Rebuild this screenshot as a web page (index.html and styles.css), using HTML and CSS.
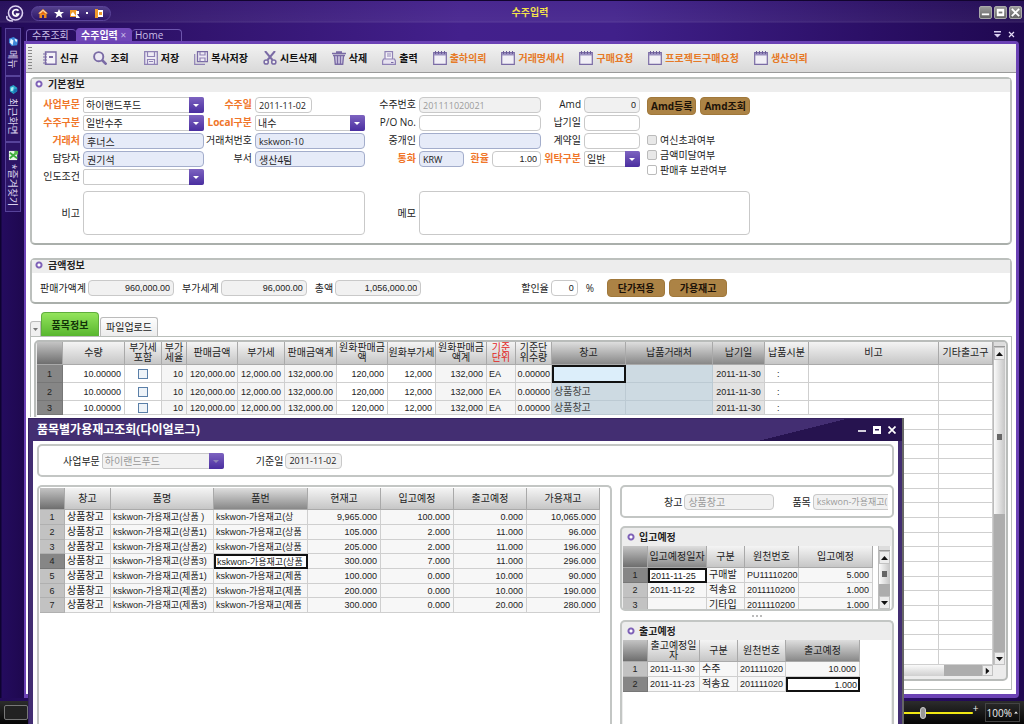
FILE: index.html
```
<!DOCTYPE html>
<html lang="ko">
<head>
<meta charset="utf-8">
<title>수주입력</title>
<link rel="stylesheet" href="styles.css">
</head>
<body>
<svg class="defs" aria-hidden="true">
  <symbol id="i-form" viewBox="0 0 14 14"><path d="M.7 1.500h12.600v11.800H.7z" fill="#f1eff6" stroke="#7a6ba5" stroke-width="1.200"/><path d="M1 2h12v2.500H1z" fill="#9a8fc0"/><path d="M2.500 0v3M5.500 0v3M8.500 0v3M11.500 0v3" stroke="#6c5d98"/></symbol>
  <symbol id="i-drop" viewBox="0 0 7 4"><path d="M0 0h7L3.500 4z" fill="currentColor"/></symbol>
</svg>
<div class="app">
  <header class="titlebar">
    <svg class="logo" viewBox="0 0 18 17"><circle cx="9.500" cy="8" r="7" fill="#3a2170" stroke="#ddd3f2" stroke-width="1.600"/><path d="M12.500 5.800C11 4 7 4.200 6.700 7.600c0 4 4.800 4.400 5.800 1.600H9.800" fill="none" stroke="#fff" stroke-width="1.700"/><path d="M1 11c-1 3 1 5 6 5" fill="none" stroke="#ddd3f2" stroke-width="1.500"/></svg>
    <nav class="quick">
      <button aria-label="홈"><svg viewBox="0 0 10 9"><path d="M5 0l5 4.500H8.500V9H6V6H4v3H1.500V4.500H0z" fill="#f08a1c"/><path d="M5 .5L9.500 4.500H.5z" fill="#ffd9a8"/><path d="M5 2l3 3H2z" fill="#e66a10"/></svg></button>
      <button aria-label="즐겨찾기"><svg viewBox="0 0 10 9"><path d="M5 0l1.400 3H10L7.200 5.200 8.300 9 5 6.800 1.700 9l1.100-3.800L0 3h3.600z" fill="#fff"/></svg></button>
      <button aria-label="화면"><svg viewBox="0 0 10 9"><path d="M0 1h7v7H0z" fill="#f09a2c"/><path d="M1 5l2-2 3 4H1z" fill="#fff"/><path d="M6 2h3v3H7l3 4H6z" fill="#fff"/></svg></button>
      <i class="quick-dot"></i>
      <button aria-label="종료"><svg viewBox="0 0 10 9"><path d="M1 0h3v9H1z" fill="#f09a2c"/><path d="M4 1h5v7H4z" fill="#fff"/><path d="M5 3h3v3H5z" fill="#f09a2c"/></svg></button>
    </nav>
    <h1 class="app-title">수주입력</h1>
    <div class="winbtns">
      <button aria-label="최소화"><svg viewBox="0 0 12 12"><path d="M2 8h8" stroke="#fff" stroke-width="2"/></svg></button>
      <button aria-label="최대화"><svg viewBox="0 0 12 12"><path d="M2 2h8v8H2z" fill="#fff"/><path d="M4 5h4v2H4z" fill="#777"/></svg></button>
      <button aria-label="닫기"><svg viewBox="0 0 12 12"><path d="M2 2l8 8M10 2l-8 8" stroke="#fff" stroke-width="2"/></svg></button>
    </div>
  </header>

  <div class="middle">
    <aside class="sidebar">
      <button class="side-tab side-menu"><svg viewBox="0 0 12 12"><path d="M1 3l5-2 5 3-1 6-6 1-3-4z" fill="#3c86d8"/><path d="M3 3l3 2-1 5-3-3z" fill="#e8f3ff"/><path d="M7 3l3 1-1 3z" fill="#fff"/></svg>메뉴</button>
      <button class="side-tab side-recent"><svg viewBox="0 0 12 12"><path d="M2 3l4-2 4 3v4l-4 3-4-3z" fill="#2aa5c8"/><path d="M3 4l3-1v4l-3 1z" fill="#a9ecf5"/><path d="M6 6l4-1v3l-4 2z" fill="#1873b5"/></svg>최근화면</button>
      <button class="side-tab side-fav"><svg viewBox="0 0 12 12"><path d="M1 1h9v10H1z" fill="#e8f6e8"/><path d="M2 3l8 6M2 9l7-6" stroke="#3dac3d" stroke-width="2"/><path d="M7 1h4v4H7z" fill="#58b84c"/></svg>*즐겨찾기</button>
    </aside>

    <div class="workspace">
      <div class="doctabs">
        <button class="doctab doctab-a">수주조회</button>
        <button class="doctab doctab-on">수주입력 <span class="x">×</span></button>
        <button class="doctab doctab-b">Home</button>
        <span class="doc-tools"><button aria-label="목록"><svg viewBox="0 0 7 7"><path d="M0 0h7v1.500H0zM0 3h7L3.500 6.500z" fill="#d8cdf0"/></svg></button><button aria-label="탭 닫기"><svg viewBox="0 0 7 7"><path d="M1 1l5 5M6 1L1 6" stroke="#e4dbf6" stroke-width="1.200"/></svg></button></span>
      </div>
      <main class="frame">
        <div class="toolbar">
          <i class="grip"></i>
          <button><svg viewBox="0 0 14 14"><path d="M2.500 1h10.500v12.300H2.500z" fill="#f4f2f8" stroke="#7a6ba5" stroke-width="1.400"/><path d="M6 5h4v2H6z" fill="#7a6ba5"/><path d="M0 3h4M0 6h4M0 9h4M0 12h4" stroke="#7a6ba5"/></svg>신규</button>
          <button><svg viewBox="0 0 14 14"><circle cx="5.700" cy="5.700" r="4.600" fill="#ece9f4" stroke="#7a6ba5" stroke-width="1.900"/><path d="M9 9l4.500 4.500" stroke="#7a6ba5" stroke-width="2.600"/></svg>조회</button>
          <button><svg viewBox="0 0 14 14"><path d="M.7.7h12.600v12.600H.7z" fill="#eeebf5" stroke="#8f82b5" stroke-width="1.300"/><path d="M3.500 1v4.500h7V1M3.500 13V8.500h7V13M5 10.500h4" fill="none" stroke="#8f82b5" stroke-width="1.200"/></svg>저장</button>
          <button><svg viewBox="0 0 14 14"><path d="M3.500.7h10v10h-10z" fill="#eeebf5" stroke="#7a6ba5" stroke-width="1.300"/><path d="M.7 3v10.300H11M6 1v3h5V1M6 10.500V7h5v3.500" fill="none" stroke="#8f82b5" stroke-width="1.200"/></svg>복사저장</button>
          <button><svg viewBox="0 0 14 14"><path d="M2 0l7.500 9M12 0L4.500 9" stroke="#7a6ba5" stroke-width="2"/><circle cx="3.200" cy="11" r="2.100" fill="#eee" stroke="#7a6ba5" stroke-width="1.500"/><circle cx="10.800" cy="11" r="2.100" fill="#eee" stroke="#7a6ba5" stroke-width="1.500"/></svg>시트삭제</button>
          <button><svg viewBox="0 0 14 14"><path d="M0 2.500h14M4 1h6" stroke="#7a6ba5" stroke-width="1.600"/><path d="M1 4.500h12M2.500 5l.8 8.300h7.400l.8-8.300M5.500 5v8M8.500 5v8" fill="#d5cfe6" stroke="#7a6ba5" stroke-width="1.400"/></svg>삭제</button>
          <button><svg viewBox="0 0 14 14"><path d="M3 8V.7h7.500V8" fill="#f4f2f8" stroke="#8f82b5" stroke-width="1.200"/><path d="M5 3h4M5 5h4" stroke="#8f82b5"/><path d="M1.500 8h11l.9 2v3.300H.6V10z" fill="#e6e2f0" stroke="#8f82b5" stroke-width="1.200"/><path d="M9 11.500h2.500" stroke="#7a6ba5"/></svg>출력</button>
          <button class="link"><svg><use href="#i-form"/></svg>출하의뢰</button>
          <button class="link"><svg><use href="#i-form"/></svg>거래명세서</button>
          <button class="link"><svg><use href="#i-form"/></svg>구매요청</button>
          <button class="link"><svg><use href="#i-form"/></svg>프로젝트구매요청</button>
          <button class="link"><svg><use href="#i-form"/></svg>생산의뢰</button>
        </div>

        <section class="panel panel-basic">
          <h2 class="panel-title">기본정보</h2>
          <form class="basic">
            <label class="req first" for="biz">사업부문</label>
            <span class="select"><select id="biz"><option>하이랜드푸드</option></select></span>
            <label class="req" for="odate">수주일</label>
            <input id="odate" class="short num" value="2011-11-02">
            <label for="ono">수주번호</label>
            <input id="ono" class="off num" value="201111020021" readonly>
            <label for="amd">Amd</label>
            <input id="amd" class="flat num r" value="0">
            <span class="btns"><button type="button" class="gold">Amd등록</button><button type="button" class="gold">Amd조회</button></span>

            <label class="req first" for="otype">수주구분</label>
            <span class="select"><select id="otype"><option>일반수주</option></select></span>
            <label class="req" for="local">Local구분</label>
            <span class="select"><select id="local"><option>내수</option></select></span>
            <label for="po">P/O No.</label>
            <input id="po">
            <label for="due">납기일</label>
            <input id="due">
            <span class="checks">
              <label><input type="checkbox" disabled>여신초과여부</label>
              <label><input type="checkbox" disabled>금액미달여부</label>
              <label><input type="checkbox">판매후 보관여부</label>
            </span>

            <label class="req first" for="cust">거래처</label>
            <input id="cust" class="code" value="후너스">
            <label for="custno">거래처번호</label>
            <input id="custno" class="code num" value="kskwon-10">
            <label for="agent">중개인</label>
            <input id="agent" class="code">
            <label for="cdate">계약일</label>
            <input id="cdate">

            <label class="first" for="mgr">담당자</label>
            <input id="mgr" class="code" value="권기석">
            <label for="dept">부서</label>
            <input id="dept" class="code" value="생산4팀">
            <label class="req" for="cur">통화</label>
            <span class="pair"><input id="cur" class="code num" value="KRW"><label class="req" for="rate">환율</label><input id="rate" class="num r" value="1.00"></span>
            <label class="req" for="cons">위탁구분</label>
            <span class="select"><select id="cons"><option>일반</option></select></span>

            <label class="first" for="term">인도조건</label>
            <span class="select"><select id="term"><option></option></select></span>

            <label class="memo-l1" for="note">비고</label>
            <textarea class="memo1" id="note"></textarea>
            <label class="memo-l2" for="memo">메모</label>
            <textarea class="memo2" id="memo"></textarea>
          </form>
        </section>

        <section class="panel panel-amount">
          <h2 class="panel-title">금액정보</h2>
          <form class="amount">
            <label>판매가액계<input class="flat num r" value="960,000.00"></label>
            <label>부가세계<input class="flat num r" value="96,000.00"></label>
            <label>총액<input class="flat num r" value="1,056,000.00"></label>
            <label class="disc">할인율<input class="num r" value="0"></label>
            <span class="pct">%</span>
            <button type="button" class="gold wide">단가적용</button>
            <button type="button" class="gold wide">가용재고</button>
          </form>
        </section>

        <div class="tabs">
          <button class="tab-drop" aria-label="탭 목록"><svg viewBox="0 0 7 4"><use href="#i-drop"/></svg></button>
          <button class="tab tab-on">품목정보</button>
          <button class="tab">파일업로드</button>
        </div>
        <section class="tabpage">
          <div class="gridbox">
            <div class="grid-main">
              <table class="grid items">
                <thead><tr><th class="dk"></th><th>수량</th><th>부가세<br>포함</th><th>부가<br>세율</th><th>판매금액</th><th>부가세</th><th>판매금액계</th><th>원화판매금<br>액</th><th>원화부가세</th><th>원화판매금<br>액계</th><th class="red">기준<br>단위</th><th>기준단<br>위수량</th><th class="dk">창고</th><th class="dk">납품거래처</th><th class="dk">납기일</th><th>납품시분</th><th>비고</th><th>기타출고구</th></tr></thead>
                <tbody>
                  <tr class="tall"><th class="sel">1</th><td>10.00000</td><td class="c"><input type="checkbox" aria-label="부가세포함 1"></td><td class="g">10</td><td class="g">120,000.00</td><td class="g">12,000.00</td><td class="g">132,000.00</td><td>120,000</td><td>12,000</td><td class="g">132,000</td><td class="l g">EA</td><td class="g">0.00000</td><td class="cur l"></td><td class="b"></td><td class="date">2011-11-30</td><td class="t">:</td><td></td><td></td></tr>
                  <tr class="tall"><th class="sel">2</th><td>10.00000</td><td class="c"><input type="checkbox" aria-label="부가세포함 2"></td><td class="g">10</td><td class="g">120,000.00</td><td class="g">12,000.00</td><td class="g">132,000.00</td><td>120,000</td><td>12,000</td><td class="g">132,000</td><td class="l g">EA</td><td class="g">0.00000</td><td class="b l k">상품창고</td><td class="b"></td><td class="date">2011-11-30</td><td class="t">:</td><td></td><td></td></tr>
                  <tr><th class="sel">3</th><td>10.00000</td><td class="c"><input type="checkbox" aria-label="부가세포함 3"></td><td class="g">10</td><td class="g">120,000.00</td><td class="g">12,000.00</td><td class="g">132,000.00</td><td>120,000</td><td>12,000</td><td class="g">132,000</td><td class="l g">EA</td><td class="g">0.00000</td><td class="b l k">상품창고</td><td class="b"></td><td class="date">2011-11-30</td><td class="t">:</td><td></td><td></td></tr>
                  <tr><td colspan="17"></td><td></td></tr><tr><td colspan="17"></td><td></td></tr><tr><td colspan="17"></td><td></td></tr>
                  <tr><td colspan="17"></td><td></td></tr><tr><td colspan="17"></td><td></td></tr><tr><td colspan="17"></td><td></td></tr>
                  <tr><td colspan="17"></td><td></td></tr><tr><td colspan="17"></td><td></td></tr><tr><td colspan="17"></td><td></td></tr>
                  <tr><td colspan="17"></td><td></td></tr><tr><td colspan="17"></td><td></td></tr><tr><td colspan="17"></td><td></td></tr>
                  <tr><td colspan="17"></td><td></td></tr><tr><td colspan="17"></td><td></td></tr><tr><td colspan="17"></td><td></td></tr>
                  <tr><td colspan="17"></td><td></td></tr><tr><td colspan="17"></td><td></td></tr>
                </tbody>
              </table>
              <div class="vscroll">
                <i class="split"></i><button aria-label="위로"><svg class="up" viewBox="0 0 7 4"><use href="#i-drop"/></svg></button>
                <i class="thumb thumb-main"></i><i class="track"></i>
                <button aria-label="아래로"><svg viewBox="0 0 7 4"><use href="#i-drop"/></svg></button>
              </div>
            </div>
            <div class="hscroll"><i class="hthumb"></i><i class="htrack"></i><button aria-label="오른쪽"><svg class="right" viewBox="0 0 7 4"><use href="#i-drop"/></svg></button></div>
          </div>
        </section>
      </main>
    </div>
  </div>

  <footer class="status">
    <i class="status-box"></i>
    <label class="zoombar"><span>−</span><input type="range" min="0" max="100" value="28" aria-label="확대"><span>+</span></label>
    <button class="zoomval">100% <svg viewBox="0 0 7 4"><use href="#i-drop"/></svg></button>
  </footer>

  <div class="dialog" role="dialog" aria-label="품목별가용재고조회">
    <header class="dlg-title">
      <h2>품목별가용재고조회(다이얼로그)</h2>
      <div class="dlg-btns">
        <button aria-label="최소화"><svg viewBox="0 0 8 8"><path d="M0 5h8" stroke="#fff" stroke-width="1.600"/></svg></button>
        <button aria-label="최대화"><svg viewBox="0 0 8 8"><path d="M0 0h8v8H0z" fill="#fff"/><path d="M2 3h4v1.500H2z" fill="#26134f"/></svg></button>
        <button aria-label="닫기"><svg viewBox="0 0 8 8"><path d="M.5.5l7 7M7.500.5l-7 7" stroke="#fff" stroke-width="1.700"/></svg></button>
      </div>
    </header>
    <div class="dlg-body">
      <form class="box dlg-filter">
        <label for="dbiz">사업부문</label>
        <span class="select disabled"><select id="dbiz" disabled><option>하이랜드푸드</option></select></span>
        <label class="second" for="dday">기준일</label>
        <input id="dday" class="flat num short" value="2011-11-02">
      </form>
      <div class="dlg-cols">
        <div class="box stockbox">
          <table class="grid stock">
            <thead><tr><th class="dk"></th><th>창고</th><th>품명</th><th class="dk">품번</th><th>현재고</th><th>입고예정</th><th>출고예정</th><th>가용재고</th></tr></thead>
            <tbody>
              <tr><th>1</th><td class="l k">상품창고</td><td class="l">kskwon-가용재고(상품 )</td><td class="l">kskwon-가용재고(상</td><td>9,965.000</td><td>100.000</td><td>0.000</td><td>10,065.000</td></tr>
              <tr><th>2</th><td class="l k">상품창고</td><td class="l">kskwon-가용재고(상품1)</td><td class="l">kskwon-가용재고(상품</td><td>105.000</td><td>2.000</td><td>11.000</td><td>96.000</td></tr>
              <tr><th>3</th><td class="l k">상품창고</td><td class="l">kskwon-가용재고(상품2)</td><td class="l">kskwon-가용재고(상품</td><td>205.000</td><td>2.000</td><td>11.000</td><td>196.000</td></tr>
              <tr><th class="sel">4</th><td class="l k">상품창고</td><td class="l">kskwon-가용재고(상품3)</td><td class="l cur">kskwon-가용재고(상품</td><td>300.000</td><td>7.000</td><td>11.000</td><td>296.000</td></tr>
              <tr><th>5</th><td class="l k">상품창고</td><td class="l">kskwon-가용재고(제품1)</td><td class="l">kskwon-가용재고(제품</td><td>100.000</td><td>0.000</td><td>10.000</td><td>90.000</td></tr>
              <tr><th>6</th><td class="l k">상품창고</td><td class="l">kskwon-가용재고(제품2)</td><td class="l">kskwon-가용재고(제품</td><td>200.000</td><td>0.000</td><td>10.000</td><td>190.000</td></tr>
              <tr><th>7</th><td class="l k">상품창고</td><td class="l">kskwon-가용재고(제품3)</td><td class="l">kskwon-가용재고(제품</td><td>300.000</td><td>0.000</td><td>20.000</td><td>280.000</td></tr>
            </tbody>
          </table>
        </div>
        <div class="dlg-side">
          <form class="box dlg-item">
            <label for="wh">창고</label><input id="wh" class="off" value="상품창고" readonly>
            <label class="second" for="it">품목</label><input id="it" class="off num cut" value="kskwon-가용재고(" readonly>
          </form>
          <section class="box sub sub-in">
            <h3 class="sub-title">입고예정</h3>
            <div class="sub-body">
              <table class="grid incoming">
                <thead><tr><th class="dk"></th><th class="dk">입고예정일자</th><th>구분</th><th>원천번호</th><th>입고예정</th></tr></thead>
                <tbody>
                  <tr><th class="sel">1</th><td class="l cur">2011-11-25</td><td class="l k">구매발</td><td class="l">PU11110200</td><td>5.000</td></tr>
                  <tr><th>2</th><td class="l">2011-11-22</td><td class="l k">적송요</td><td class="l">2011110200</td><td>1.000</td></tr>
                  <tr><th>3</th><td class="l"></td><td class="l k">기타입</td><td class="l">2011110200</td><td>1.000</td></tr>
                </tbody>
              </table>
              <div class="vscroll">
                <i class="split"></i><button aria-label="위로"><svg class="up" viewBox="0 0 7 4"><use href="#i-drop"/></svg></button>
                <i class="thumb thumb-small"></i><i class="track"></i>
                <button aria-label="아래로"><svg viewBox="0 0 7 4"><use href="#i-drop"/></svg></button>
              </div>
            </div>
          </section>
          <div class="dots"><i></i><i></i><i></i></div>
          <section class="box sub sub-out">
            <h3 class="sub-title">출고예정</h3>
            <div class="sub-body">
              <table class="grid outgoing">
                <thead><tr><th class="dk"></th><th>출고예정일<br>자</th><th>구분</th><th>원천번호</th><th class="dk">출고예정</th></tr></thead>
                <tbody>
                  <tr><th>1</th><td class="l">2011-11-30</td><td class="l k">수주</td><td class="l">201111020</td><td>10.000</td></tr>
                  <tr><th class="sel">2</th><td class="l">2011-11-23</td><td class="l k">적송요</td><td class="l">201111020</td><td class="cur">1.000</td></tr>
                </tbody>
              </table>
            </div>
          </section>
        </div>
      </div>
    </div>
  </div>
</div>
</body>
</html>
```

FILE: styles.css
```
*{box-sizing:border-box}
body{margin:0;background:#12062e;font:10px/12px "Open Sans","Noto Sans CJK KR",sans-serif;color:#222}
button,input,select,textarea{font:inherit;color:inherit;margin:0;padding:0;border:0;background:none}
button{cursor:pointer;white-space:nowrap}
h1,h2,h3{margin:0;font-size:10px;line-height:12px}
svg{display:block;flex:none}
.defs{position:absolute;width:0;height:0}
.app{position:relative;min-height:100vh;display:flex;flex-direction:column;overflow:hidden;background:linear-gradient(90deg,#220a58 0,#32146f 20%,#43208c 45%,#40208a 60%,#2b0f66 85%,#1f0850)}

.titlebar{display:flex;align-items:center;height:27px;padding:0 2px 2px 6px;border-top:1px solid #12042f;background:linear-gradient(#ffffff08,#ffffff10 20px,#ffffff20 21px,transparent 22px)}
.logo{width:18px;height:17px}
.quick{display:flex;align-items:center;gap:6px;height:15px;margin-left:7px;padding:0 6px;border:1px solid #5b449a;border-radius:8px;background:linear-gradient(#54408c,#2d1668)}
.quick svg{width:10px;height:9px}
.quick-dot{width:2px;height:2px;background:#fff}
.app-title{flex:1;text-align:center;color:#f3e24a;padding:0 30px 3px 0}
.winbtns{display:flex;gap:2px;padding-bottom:2px}
.winbtns button{width:13px;height:13px;border-radius:2px;background:linear-gradient(#9a9a9a,#666);border:1px solid #aaa}
.winbtns svg{width:11px;height:11px}

.middle{flex:1;display:flex;min-height:0;padding-right:5px}
.sidebar{width:24px;padding:1px 0 0 5px;background:linear-gradient(90deg,#0e0330 0,#0e0330 1px,#240b5e 2px,#1e084f)}
.side-tab{display:flex;align-items:center;gap:3px;width:16px;padding:7px 0;writing-mode:vertical-rl;text-orientation:sideways;color:#d9d0ee;border:1px solid #57439a;background:#2c1466;line-height:14px}
.side-tab svg{width:11px;height:11px}
.side-menu{height:48px}
.side-recent{height:66px}
.side-fav{height:70px}
.workspace{flex:1;display:flex;flex-direction:column;min-width:0}
.doctabs{display:flex;align-items:flex-end;height:14px;padding-left:2px}
.doctab{height:12px;line-height:11px;padding:0 5px;text-align:left;color:#c9bde6;border:1px solid #6d55ad;border-bottom:0;border-radius:4px 4px 0 0}
.doctab-a{width:50px;border-right:0}
.doctab-on{width:56px;height:13px;padding-left:4px;background:#7047b8;border-color:#7047b8;color:#fff;font-weight:700}
.doctab-on .x{font-weight:400;color:#c9bde6}
.doctab-b{width:50px;padding-left:3px;border-left:0}
.doc-tools{display:flex;gap:7px;margin-left:auto;padding:0 4px 3px}
.doc-tools svg{width:7px;height:7px}
.frame{flex:1;display:flex;flex-direction:column;padding:0 0 4px;background:#fff;border:solid #6b42b5;border-width:3px 3px 4px 2px;border-radius:0 4px 4px 0}

.toolbar{display:flex;align-items:center;gap:15px;height:29px;padding-left:2px;background:linear-gradient(#f2f2f2,#d9d9d9);border-bottom:1px solid #9a9a9a}
.toolbar .grip{width:4px;height:24px;margin-right:-4px;background:radial-gradient(#888 40%,transparent 50%) 0 0/2px 3px}
.toolbar button{display:flex;align-items:center;gap:3px;font-weight:700;color:#111}
.toolbar .link{color:#e67a28}
.toolbar svg{width:14px;height:14px}

.panel{margin:4px 4px 0;border:2px solid #bcc0bd;border-bottom-color:#aaafab;border-radius:5px;background:#fff}
.panel-amount{margin-top:13px}
.panel-title{height:13px;line-height:10px;padding-left:16px;background:radial-gradient(circle at 7px 5px,#fff 1px,#7f62b8 2px,#7f62b8 3px,transparent 4px) #ededed}
.panel label,.box label{white-space:nowrap}
.req{color:#f0762a;font-weight:700}
input:not([type]),select,textarea{width:100%;min-width:0;height:16px;padding:0 3px;border:1px solid #c9c9c9;border-radius:4px;background:#fff;outline:0}
textarea{display:block;height:44px;resize:none}
input.num{font-size:9px}
input.num.r{font-family:"Liberation Sans",sans-serif}
input.r{text-align:right}
input.code{background:#e6ebf8;border-color:#a3adcb}
input.off{background:#f1f1f1;color:#9b9b9b}
input.flat{background:#f1f1f1}
input.short{width:57px}
.select{position:relative;display:block}
select{display:block;appearance:none;border-radius:2px;padding-left:2px}
.select::before{content:"";position:absolute;right:0;top:0;width:15px;height:16px;border-radius:0 2px 2px 0;background:linear-gradient(#7d63c0,#4a2ea0);pointer-events:none}
.select::after{content:"";position:absolute;right:5px;top:7px;border:3px solid transparent;border-top-color:#fff;border-bottom:0;pointer-events:none}
.select.disabled::after{border-top-color:#8f83b8}
select:disabled{background:#f2f2f2;color:#999;opacity:1}

.basic{display:grid;grid-template-columns:47px 121px 45px 110px 48px 122px 37px 56px 1fr;grid-template-rows:repeat(5,16px);gap:2px 3px;padding:5px 0 8px 1px}
.basic>label,.pair label{justify-self:end;line-height:14px}
.basic>.first{grid-column:1}
.btns{display:flex;gap:4px;padding-left:4px;height:18px;grid-column:9}
.gold{height:18px;min-width:47px;padding:0 3px;border-radius:4px;background:#ac8345;border:1px solid #a0783b;color:#1c1208;font-weight:700}
.gold.wide{min-width:58px}
.checks{grid-column:9;grid-row:3/6;display:flex;flex-direction:column;gap:2px;padding-left:4px}
.checks label{display:flex;align-items:center;gap:3px;height:13px}
input[type=checkbox]{appearance:none;width:10px;height:10px;border:1px solid #bbb;border-radius:2px;background:#fff}
input[type=checkbox]:disabled{background:#e8e8e8}
.pair{display:grid;grid-template-columns:45px 22px 49px;gap:3px}
.memo-l1,.memo-l2{align-self:center;margin-top:4px}
.basic textarea{margin-top:4px}
.basic>.memo-l1{grid-column:1}
.memo1{grid-column:2/5}
.basic>.memo-l2{grid-column:5}
.memo2{grid-column:6/9;width:331px}

.amount{display:flex;align-items:center;height:29px;padding-left:8px}
.amount label{display:flex;align-items:center;gap:2px;margin-right:8px}
.amount input:not([type]){width:86px}
.amount .disc{margin-left:92px}
.amount .disc input{width:27px}
.pct{margin-right:13px}
.amount .gold{margin-right:4px}

.tabs{display:flex;align-items:flex-end;margin:8px 4px 0}
.tab-drop{display:grid;place-items:center;width:11px;height:15px;color:#777;background:#f0f0f0;border:1px solid #bbb;border-bottom:0;border-radius:3px 0 0}
.tab-drop svg{width:5px;height:3px}
.tab{height:19px;padding:0 5px;min-width:58px;background:linear-gradient(#fdfdfd,#ececec);border:1px solid #bbb;border-bottom:0;border-radius:3px 3px 0 0}
.tab-on{height:24px;margin-right:1px;font-weight:700;color:#123208;background:linear-gradient(#93e45c,#58b62e);border-color:#5fae3c;border-radius:4px 4px 0 0}
.tabpage{flex:1;margin:0 4px;padding:3px;border:1px solid #b9beba}
.gridbox{border:2px solid #b9bcba;border-radius:5px;padding:0 1px 3px;background:#ececec}
.grid-main{display:flex}

.grid{table-layout:fixed;border-collapse:separate;border-spacing:0;background:#fff;font-family:"Liberation Sans","Noto Sans CJK KR",sans-serif;font-size:9px}
.grid th,.grid td{padding:0 3px;overflow:hidden;white-space:nowrap;border:solid #cfcfcf;border-width:0 1px 1px 0;font-weight:400;line-height:12px}
.grid thead th{height:23px;padding:0;font-size:10px;line-height:10px;background:linear-gradient(#f4f4f4,#c6c6c6);border-right-color:#a9a9a9;border-bottom-color:#aaa}
.grid thead .dk{background:linear-gradient(#dedede,#888)}
.grid thead th:first-child{background:linear-gradient(#c4c4c4,#6e6e6e)}
.grid .red{color:#e2231a}
.grid td{height:15px;text-align:right}
.grid tr:nth-child(3n) td{height:14px}
.grid tbody th{background:#c2c2c2;border-color:#b0b0b0}
.grid tbody .sel{background:#868686;border-color:#777}
.grid td.l{text-align:left;padding-left:2px}
.grid td.c{text-align:center;padding:0}
.grid td.t{text-align:left;padding-left:12px}
.grid td.k{font-size:10px}
.grid td.g{background:#f5f5f5}
.grid td.b{background:#cddae2;border-color:#bccad3;color:#444}
.grid td.date{background:#e3e3e3;padding:0 2px;text-align:center}
.grid td.cur{border:2px solid #111;background:#fff;line-height:10px;padding:0 1px}
.items{flex:1;width:0}
.items tr.tall td.cur{background:#dceefa}
.items tr.tall td{height:18px}
.items td input[type=checkbox]{display:block;margin:0 auto;border-color:#5a7fa8;border-radius:0;background:#eef3f8}
.items th:nth-child(1){width:26px}
.items th:nth-child(2){width:62px}
.items th:nth-child(3){width:37px}
.items th:nth-child(4){width:25px}
.items th:nth-child(5),.items th:nth-child(8),.items th:nth-child(10){width:51px}
.items th:nth-child(6){width:47px}
.items th:nth-child(7),.items th:nth-child(15){width:52px}
.items th:nth-child(9){width:48px}
.items th:nth-child(11){width:29px}
.items th:nth-child(12){width:36px}
.items td:nth-child(12){padding:0 1px}
.items th:nth-child(13){width:74px}
.items th:nth-child(14){width:87px}
.items th:nth-child(16){width:44px}
.items th:nth-child(18){width:54px}

.vscroll{display:flex;flex-direction:column;width:12px;background:#adadad;border-left:1px solid #bbb}
.vscroll button,.hscroll button{display:grid;place-items:center;flex:none;width:11px;height:13px;background:#ececec;border:1px solid #c2c2c2;color:#111}
.vscroll svg,.hscroll svg{width:7px;height:4px}
.up{transform:rotate(180deg)}
.right{transform:rotate(-90deg)}
.split{height:5px;background:#ddd;border-bottom:1px solid #999}
.track{flex:1}
.thumb{background:linear-gradient(#666,#666) center/5px 6px no-repeat,linear-gradient(90deg,#fafafa,#c6c6c6)}
.thumb-main{height:154px}
.thumb-small{height:20px}
.hscroll{display:flex;height:11px;margin-right:12px}
.hscroll button{height:11px}
.hthumb{flex:1;background:linear-gradient(#fafafa,#cfcfcf)}
.htrack{width:38px;background:#adadad}

.status{display:flex;align-items:center;height:23px;margin-top:3px;padding:0 4px;background:linear-gradient(#2c2c2c,#050505);color:#eee}
.status-box{width:24px;height:15px;border:1px solid #777;border-radius:2px;background:#222}
.zoombar{display:flex;align-items:flex-start;margin-left:auto;width:82px;height:18px}
.zoombar span{line-height:8px}
.zoombar input{flex:1;min-width:0;height:16px;margin:1px 0 0;appearance:none;background:linear-gradient(#f0e814,#f0e814) center/100% 2px no-repeat}
.zoombar input::-webkit-slider-thumb{appearance:none;width:6px;height:12px;border-radius:3px;background:#999;border:1px solid #ccc}
.zoomval{display:flex;align-items:center;gap:2px;margin-left:6px;padding:0 1px;height:19px;border:1px solid #444}
.zoomval svg{width:4px;height:3px;transform:rotate(180deg)}

.dialog{position:absolute;left:28px;right:122px;top:418px;bottom:0;display:flex;flex-direction:column;background:#432e72;border:solid #35225f;border-width:1px 0 0 1px;box-shadow:0 -1px 0 #fff,2px 0 0 #666}
.dlg-title{display:flex;align-items:center;justify-content:space-between;height:22px;flex:none;padding:0 6px 0 8px;color:#fff;background:linear-gradient(166deg,transparent 38%,#26134f 38%) right/144px 100% no-repeat}
.dlg-title h2{font-size:12px;line-height:16px}
.dlg-btns{display:flex;gap:7px}
.dlg-btns svg{width:8px;height:8px}
.dlg-body{flex:1;display:flex;flex-direction:column;gap:8px;min-height:0;margin:0 4px;padding:3px 4px 0;background:#fff}
.box{border:2px solid #c3c6c4;border-radius:5px;background:#fff}
.dlg-filter{display:flex;align-items:center;gap:2px;height:33px;flex:none;padding-left:24px}
.dlg-filter .select{width:122px}
.second{margin-left:30px}
.dlg-cols{flex:1;display:flex;gap:8px;min-height:0}
.stockbox{flex:1;padding:1px;border-bottom:0;border-radius:5px 5px 0 0;overflow:hidden}
.grid.stock{width:560px}
.grid.stock thead th,.sub .grid thead th{height:22px}
.stock td{background:#f7f7f7}
.stock th:nth-child(1),.incoming th:nth-child(1),.outgoing th:nth-child(1){width:25px}
.stock th:nth-child(2){width:46px}
.stock th:nth-child(3){width:103px}
.stock th:nth-child(4){width:94px}
.dlg-side{display:flex;flex-direction:column;width:274px}
.dlg-item{display:flex;align-items:center;gap:2px;height:33px;flex:none;padding:0 4px 0 42px}
.dlg-item .second{margin-left:16px}
.dlg-item #wh{width:90px;flex:none}
.dlg-item .cut{flex:1;padding-right:0;border-right:0;border-radius:4px 0 0 4px}
.sub{display:flex;flex-direction:column;padding:0 1px;background:#ededed}
.sub-title{height:18px;padding:3px 0 0 16px;flex:none;background:radial-gradient(circle at 8px 9px,#fff 1px,#7f62b8 2px,#7f62b8 3px,transparent 4px)}
.sub-body{flex:1;display:flex;justify-content:space-between;min-height:0;overflow:hidden;background:#fff}
.sub-body .grid{align-self:flex-start}
.sub-in{height:85px;flex:none;margin-top:8px}
.sub-in .vscroll{margin-right:1px}
.sub-out{flex:1;border-bottom:0;border-radius:5px 5px 0 0}
.incoming{width:250px}
.incoming th:nth-child(2){width:59px}
.incoming th:nth-child(3){width:38px}
.incoming th:nth-child(4){width:54px}
.outgoing{width:237px}
.outgoing th:nth-child(2){width:52px}
.outgoing th:nth-child(3){width:38px}
.outgoing th:nth-child(4){width:48px}
.incoming td,.outgoing td{background:#f7f7f7}
.dots{display:flex;justify-content:center;align-items:center;gap:2px;height:9px;flex:none}
.dots i{width:2px;height:2px;background:#bbb}
```
